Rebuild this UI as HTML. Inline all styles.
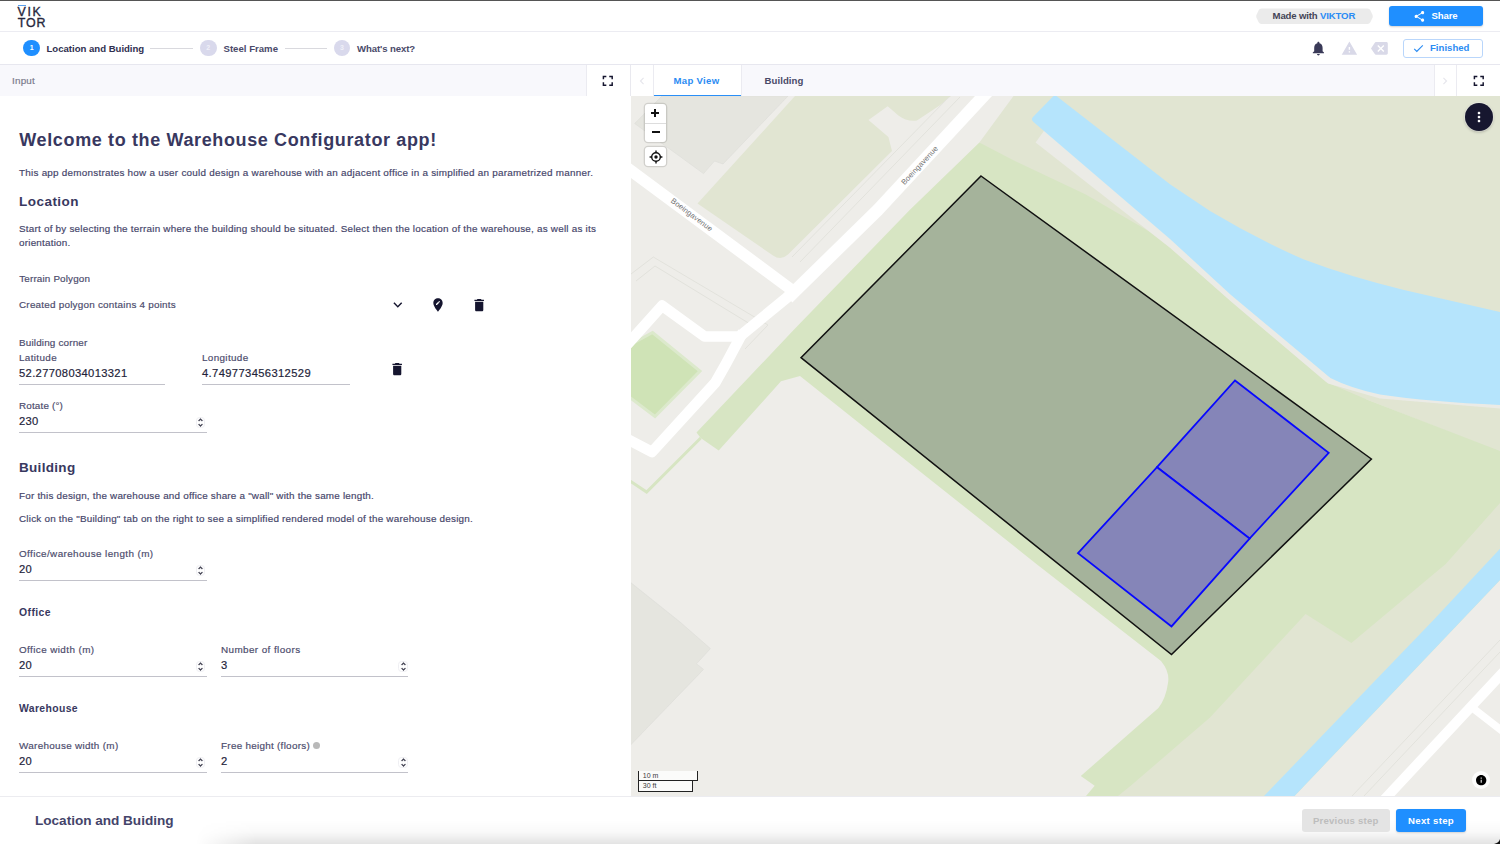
<!DOCTYPE html>
<html lang="en">
<head>
<meta charset="utf-8">
<title>Warehouse Configurator</title>
<style>
*{box-sizing:border-box;margin:0;padding:0}
html,body{width:1500px;height:844px;overflow:hidden;background:#fff}
body{font-family:"Liberation Sans",sans-serif;color:#3a3a5a;position:relative}
.abs{position:absolute}
.t{position:absolute;white-space:nowrap;line-height:1;-webkit-text-stroke:.18px currentColor}
.ic{position:absolute;display:block}
#topline{left:0;top:0;width:1500px;height:1px;background:#555}
#hdr{left:0;top:1px;width:1500px;height:31px;background:#fff;border-bottom:1px solid #ececf2}
#stepbar{left:0;top:32px;width:1500px;height:33px;background:#fff;border-bottom:1px solid #e7e7ef}
#tabbar{left:0;top:65px;width:1500px;height:31px;background:#f8f8fc}
.cell{position:absolute;top:65px;height:31px;background:#fff}
.vd{position:absolute;top:65px;height:31px;width:1px;background:#ebebf1}
.circ{position:absolute;width:16.6px;height:16.6px;border-radius:50%;background:#d9d9ec;color:#f0f0f8;font-size:7px;text-align:center;line-height:16.6px;font-weight:bold;top:39.9px}
.conn{position:absolute;height:1px;background:#d9d9de;top:47.6px}
#left{left:0;top:96px;width:630px;height:700px;background:#fff}
#map{left:630px;top:96px;width:870px;height:700px;overflow:hidden;background:#eeede9}
#foot{left:0;top:796px;width:1500px;height:48px;background:#fff;border-top:1px solid #ececf0}
.ul{position:absolute;height:1px;background:#c2c2ca}
.spin{position:absolute;width:9.2px;height:11.2px;border:1px solid #efeff3;border-radius:3.5px;background:#fff}
.mbox{position:absolute;background:#fff;border-radius:3px;box-shadow:0 0 0 1.3px rgba(0,0,0,.12)}
.btn{position:absolute;border-radius:3px}
.scale{position:absolute;left:7.8px;background:rgba(255,255,255,.75);border:1.6px solid #222;border-top:none;font-size:7px;color:#3a3a3a;padding-left:4px;line-height:9px;height:10.6px;white-space:nowrap}
</style>
</head>
<body>
<div class="abs" id="hdr"></div>
<div class="abs" id="topline"></div>
<div class="abs" id="stepbar"></div>
<div class="abs" id="tabbar"></div>
<div class="cell" style="left:586px;width:44px"></div>
<div class="cell" style="left:631px;width:22px"></div>
<div class="cell" style="left:653.5px;width:87.5px;border-bottom:1.700px solid #2a8ff7"></div>
<div class="cell" style="left:1434px;width:66px"></div>
<div class="vd" style="left:586px"></div>
<div class="vd" style="left:630px;background:#e9e9ef"></div>
<div class="vd" style="left:653px"></div>
<div class="vd" style="left:741px"></div>
<div class="vd" style="left:1434px"></div>
<div class="vd" style="left:1456px"></div>
<div class="abs" id="left"></div>
<div class="abs" id="map">
<svg id="mapsvg" width="870" height="700" viewBox="630 96 870 700" style="position:absolute;left:0;top:0">
<rect x="630" y="96" width="870" height="700" fill="#eeede9"/>
<!-- buildings -->
<polygon points="662,96 634.7,123.5 703.5,173.6 714.5,161 723,164 788,96" fill="#e5e5df" stroke="#dededa" stroke-width=".7"/>
<polygon points="630,582 680,622 710.4,648.6 696.5,663.8 703.5,669.4 630,745.6" fill="#e5e5df" stroke="#dededa" stroke-width=".7"/>
<!-- pale field top -->
<path d="M795,96 L697.500,203.500 L773,255.500 Q781,261 788,254.500 L892,151 L888.4,137 L868.5,119.9 L887.7,106.3 L898.4,115.6 Q907,122 916.9,120.6 L939.6,105.6 L951,96 Z" fill="#e1e5d2"/>
<!-- pale big top right -->
<polygon points="1013.5,96 1500,96 1500,452 1368,400 1300,380 1100,230 979.4,142.6" fill="#e1e5d2"/>
<!-- light green big -->
<path d="M979.4,142.6 L909.7,210 L793.6,330 L696.5,432.6 L700.7,438 L718.7,450.6 L781,381.3 L800,376 L920,471.4 L1036.4,564 L1161,661 Q1170,672 1168,683 Q1166,698 1158.4,708 L1080.8,776 L1094.7,785.8 L1086,796 L1500,796 L1500,451 L1368,400 L1326,382 L1231,301 L1170,247.7 L1150,232 L1085.8,194.6 L1010,158.6 Z" fill="#d7e5c3"/>
<!-- thin V outline -->
<polyline points="700.7,438 646.6,492 630,481" fill="none" stroke="#d7e5c3" stroke-width="3"/>
<!-- green square -->
<polygon points="652.500,332.500 700,371 655,416.500 628,396 628,346" fill="#cfe3b6" stroke="#dce9cc" stroke-width="3"/>
<!-- pale bottom right -->
<polygon points="1210,717.5 1305.6,614 1351.4,643 1445.7,564 1500,503 1500,560 1270,796 1118,796 1130.7,785.8" fill="#e1e5d2"/>
<!-- grey strip under water -->
<path d="M1046,128 L1035.6,142.4 L1170,247.7 L1231,301.500 L1328,383.500 L1380,398.500 L1500,408.500 L1500,404 L1380,393 L1231,290 L1100,172 Z" fill="#ebebe6"/>
<!-- water river -->
<path d="M1056.4,96 L1170,184.2 L1210,211 Q1255,238 1304,259.600 Q1350,277 1404,290 L1500,312 L1500,405 Q1430,402 1380,394.600 Q1350,388 1330.400,378 L1231,295 L1170,239 L1100,179 L1033.500,122 Q1030.500,119.500 1033,117 L1053.500,96 Z" fill="#b5e4fc"/>
<!-- land SE of canal -->
<polygon points="1500,580 1294.5,796 1500,796" fill="#eeede9"/>
<!-- canal -->
<polygon points="1500,548.7 1433.5,620 1264,796 1294.5,796 1500,580" fill="#b5e4fc"/>
<!-- faint lines -->
<g fill="none" stroke="#e2e2dc" stroke-width="1">
<polyline points="949,97 792,257"/>
<polyline points="960,97 800,262"/>
<polyline points="631,274 653.300,257 768,325 745,349"/>
<polyline points="636,281 655,266 755,327"/>
<polyline points="1500,640 1352,796"/>
<polyline points="1500,652 1364,796"/>
</g>
<!-- roads -->
<g fill="none" stroke="#fff" stroke-linejoin="round">
<polyline points="990,89 983.5,96 877.8,210 795,291 788,298" stroke-width="12.5"/>
<polyline points="795,291 741.4,335" stroke-width="10.8"/>
<polyline points="625,166.300 793.800,291.500" stroke-width="11.500"/>
<polyline points="741.400,336.500 704.600,336.500 662,305.700 625,347" stroke-width="10.700"/>
<polyline points="743,332 726,363.700 715.300,382.700 652,452 625,438" stroke-width="10.700"/>
<polyline points="1505,670.2 1383,801" stroke-width="10"/>
<polyline points="1472,707.5 1505,733" stroke-width="7.5"/>
</g>
<!-- labels -->
<g font-family="Liberation Sans, sans-serif" font-size="7.6" fill="#747474" text-anchor="middle" letter-spacing="0.12" stroke="#fff" stroke-width="1.2" paint-order="stroke" stroke-opacity=".7">
<text transform="translate(690.300,216.800) rotate(37)">Boeingavenue</text>
<text transform="translate(921.5,167) rotate(-47)">Boeingavenue</text>
</g>
<!-- terrain polygon -->
<polygon points="981,176 1371.4,459 1171.5,654.5 801,357.7" fill="#a5b39b" stroke="#111" stroke-width="1.5"/>
<polygon points="1235,380.5 1328.7,452.8 1249.6,538.5 1157,467.2" fill="#8585b8" stroke="#0808ff" stroke-width="1.8"/>
<polygon points="1157,467.2 1249.6,538.5 1171.5,626.4 1078,553.2" fill="#8585b8" stroke="#0808ff" stroke-width="1.8"/>
</svg>

<div class="mbox" style="left:15.4px;top:7.8px;width:20.2px;height:38.4px"><div style="position:absolute;left:0;top:19px;width:100%;height:1px;background:#ddd"></div></div>
<div class="mbox" style="left:15.4px;top:51px;width:20.2px;height:19.4px"></div>
<svg class="ic" style="left:20.3px;top:12.2px" width="10" height="10" viewBox="0 0 10 10"><path d="M5 1v8M1 5h8" stroke="#111" stroke-width="2" fill="none"/></svg>
<svg class="ic" style="left:20.5px;top:31.3px" width="10" height="10" viewBox="0 0 10 10"><path d="M1 5h8" stroke="#111" stroke-width="2" fill="none"/></svg>
<svg class="ic" style="left:17.5px;top:52.7px" width="16" height="16" viewBox="0 0 16 16"><circle cx="8" cy="8" r="4.300" fill="none" stroke="#111" stroke-width="1.400"/><circle cx="8" cy="8" r="1.700" fill="#111"/><path d="M8 1.600v2.400M8 12v2.400M1.600 8h2.400M12 8h2.400" stroke="#111" stroke-width="1.400"/></svg>
<div class="abs" style="left:835px;top:7px;width:28px;height:28px;border-radius:50%;background:#17172f;box-shadow:0 0 0 1px rgba(255,255,255,.35),0 1px 3px rgba(0,0,0,.3)"></div>
<svg class="ic" style="left:841px;top:13px" width="16" height="16" viewBox="0 0 24 24"><path fill="#fff" d="M12 8c1.1 0 2-.9 2-2s-.9-2-2-2-2 .9-2 2 .9 2 2 2zm0 2c-1.1 0-2 .9-2 2s.9 2 2 2 2-.9 2-2-.9-2-2-2zm0 6c-1.1 0-2 .9-2 2s.9 2 2 2 2-.9 2-2-.9-2-2-2z"/></svg>
<div class="abs" style="left:842px;top:675px;width:18px;height:18px;border-radius:50%;background:rgba(255,255,255,.85)"></div>
<svg class="ic" style="left:844.8px;top:677.8px" width="12.4" height="12.4" viewBox="0 0 24 24"><path fill="#000" d="M12 2C6.48 2 2 6.48 2 12s4.48 10 10 10 10-4.48 10-10S17.52 2 12 2zm1 15h-2v-6h2v6zm0-8h-2V7h2v2z"/></svg>
<div class="scale" style="top:674.5px;width:60.7px">10 m</div>
<div class="scale" style="top:685.1px;width:55.4px">30 ft</div>
</div>
<div class="abs" style="left:630px;top:96px;width:.7px;height:700px;background:#fff"></div>
<div class="abs" id="foot"></div>
<div class="abs" style="left:196px;top:820px;width:1304px;height:24px;background:linear-gradient(to bottom,rgba(0,0,0,0) 0%,rgba(0,0,0,.025) 50%,rgba(0,0,0,.11) 100%);-webkit-mask-image:linear-gradient(to right,transparent 0,#000 60px);mask-image:linear-gradient(to right,transparent 0,#000 60px)"></div>
<svg class="ic" style="left:1492px;top:836px" width="8" height="8" viewBox="0 0 8 8"><path d="M8 3 Q7 7 2 8 L8 8Z" fill="#111"/></svg>

<!-- logo -->
<div class="abs" style="left:18px;top:4.6px;width:7.5px;height:1.6px;background:#5aa0ee"></div>
<span class="t" style="left:17.6px;top:5.6px;font-size:12.4px;color:#26263c;letter-spacing:1.6px;-webkit-text-stroke:.35px #26263c">VIK</span>
<span class="t" style="left:17.8px;top:16.6px;font-size:12.4px;color:#26263c;letter-spacing:.9px;-webkit-text-stroke:.35px #26263c">TOR</span>

<!-- made with pill -->
<svg class="ic" style="left:1256px;top:7.6px" width="117" height="16.6" viewBox="0 0 117 16.6"><path d="M5.5 0.6 H111.500 Q113.500 0.6 114.500 2.6 L116.600 7 Q117 8.300 116.600 9.600 L114.500 14 Q113.500 16 111.500 16 H5.5 Q3.500 16 2.500 14 L0.400 9.600 Q0 8.300 0.400 7 L2.500 2.600 Q3.500 0.600 5.500 0.600Z" fill="#ebebeb"/></svg>
<!-- share button -->
<div class="btn" style="left:1388.8px;top:6px;width:94.4px;height:20.2px;background:#1f8fff;box-shadow:0 1px 2px rgba(0,0,0,.18)"></div>
<svg class="ic" style="left:1412.7px;top:9.5px" width="12.8" height="12.8" viewBox="0 0 24 24"><path fill="#fff" d="M18 16.08c-.76 0-1.44.3-1.96.77L8.91 12.7c.05-.23.09-.46.09-.7s-.04-.47-.09-.7l7.05-4.11c.54.5 1.25.81 2.04.81 1.66 0 3-1.34 3-3s-1.34-3-3-3-3 1.34-3 3c0 .24.04.47.09.7L8.04 9.81C7.5 9.31 6.79 9 6 9c-1.66 0-3 1.34-3 3s1.34 3 3 3c.79 0 1.500-.31 2.040-.81l7.120 4.160c-.05.21-.08.43-.08.65 0 1.610 1.310 2.920 2.920 2.920 1.610 0 2.920-1.310 2.920-2.920s-1.310-2.920-2.920-2.920z"/></svg>
<!-- finished button -->
<div class="btn" style="left:1403px;top:39.3px;width:79.8px;height:18.4px;background:#fff;border:1px solid #b9d6fb"></div>
<svg class="ic" style="left:1411.5px;top:41.9px" width="12.8" height="12.8" viewBox="0 0 24 24"><path fill="#2b8cf3" d="M9 16.17L4.83 12l-1.42 1.41L9 19 21 7l-1.41-1.41z"/></svg>
<!-- bell, warning, backspace -->
<svg class="ic" style="left:1310px;top:39.5px" width="16.8" height="16.8" viewBox="0 0 24 24"><path fill="#3a3a58" d="M12 22c1.1 0 2-.9 2-2h-4c0 1.1.89 2 2 2zm6-6v-5c0-3.07-1.64-5.64-4.5-6.32V4c0-.83-.67-1.500-1.500-1.500s-1.500.67-1.500 1.500v.68C7.630 5.360 6 7.920 6 11v5l-2 2v1h16v-1l-2-2z"/></svg>
<svg class="ic" style="left:1340.600px;top:39.6px" width="16.8" height="16.8" viewBox="0 0 24 24"><path fill="#d9d9e8" d="M1 21h22L12 2 1 21zm12-3h-2v-2h2v2zm0-4h-2v-4h2v4z"/></svg>
<svg class="ic" style="left:1371.300px;top:39.6px" width="16.8" height="16.8" viewBox="0 0 24 24"><path fill="#d9d9e8" d="M22 3H7c-.69 0-1.230.35-1.590.88L0 12l5.410 8.110c.36.53.9.89 1.590.89h15c1.100 0 2-.9 2-2V5c0-1.100-.9-2-2-2zm-3 12.590L17.590 17 14 13.410 10.410 17 9 15.590 12.590 12 9 8.410 10.410 7 14 10.590 17.590 7 19 8.410 15.410 12 19 15.590z"/></svg>

<!-- stepper -->
<div class="circ" style="left:23.4px;background:#1f8fff;color:#fff">1</div>
<div class="circ" style="left:200px">2</div>
<div class="circ" style="left:333.700px">3</div>
<div class="conn" style="left:150px;width:43px"></div>
<div class="conn" style="left:285px;width:42px"></div>

<!-- tab bar icons -->
<svg class="ic" style="left:599.3px;top:71.8px" width="17.6" height="17.6" viewBox="0 0 24 24"><path fill="#15152f" d="M7 14H5v5h5v-2H7v-3zm-2-4h2V7h3V5H5v5zm12 7h-3v2h5v-5h-2v3zM14 5v2h3v3h2V5h-5z"/></svg>
<svg class="ic" style="left:1470.200px;top:71.8px" width="17.6" height="17.6" viewBox="0 0 24 24"><path fill="#15152f" d="M7 14H5v5h5v-2H7v-3zm-2-4h2V7h3V5H5v5zm12 7h-3v2h5v-5h-2v3zM14 5v2h3v3h2V5h-5z"/></svg>
<svg class="ic" style="left:634.500px;top:73.6px" width="14" height="14" viewBox="0 0 24 24"><path fill="#e6e6ec" d="M15.410 7.410L14 6l-6 6 6 6 1.410-1.410L10.830 12z"/></svg>
<svg class="ic" style="left:1437.700px;top:73.6px" width="14" height="14" viewBox="0 0 24 24"><path fill="#e6e6ec" d="M10 6L8.590 7.410 13.170 12l-4.580 4.590L10 18l6-6z"/></svg>

<!-- form icons -->
<svg class="ic" style="left:388.60px;top:295.78px" width="17.6" height="17.6" viewBox="0 0 24 24"><path fill="#15152f" d="M16.590 8.590L12 13.170 7.410 8.590 6 10l6 6 6-6z"/></svg>
<svg class="ic" style="left:430.10px;top:296.60px" width="16" height="16" viewBox="0 0 24 24"><path fill="#15152f" d="M12 2C8.140 2 5 5.140 5 9c0 5.250 7 13 7 13s7-7.750 7-13c0-3.860-3.140-7-7-7zm-1.560 10H9v-1.440l3.350-3.340 1.430 1.430L10.440 12zm4.450-4.450l-.7.7-1.440-1.440.7-.7c.15-.15.39-.15.54 0l.9.9c.15.15.15.39 0 .54z"/></svg>
<svg class="ic" style="left:470.50px;top:296.70px" width="16.4" height="16.4" viewBox="0 0 24 24"><path fill="#15152f" d="M6 19c0 1.100.9 2 2 2h8c1.100 0 2-.9 2-2V7H6v12zM19 4h-3.500l-1-1h-5l-1 1H5v2h14V4z"/></svg>
<svg class="ic" style="left:389.10px;top:360.70px" width="16.4" height="16.4" viewBox="0 0 24 24"><path fill="#15152f" d="M6 19c0 1.100.9 2 2 2h8c1.100 0 2-.9 2-2V7H6v12zM19 4h-3.500l-1-1h-5l-1 1H5v2h14V4z"/></svg>

<!-- underlines -->
<div class="ul" style="left:19px;top:383.600px;width:146px"></div>
<div class="ul" style="left:202px;top:383.600px;width:147.500px"></div>
<div class="ul" style="left:19px;top:431.600px;width:187.500px"></div>
<div class="ul" style="left:19px;top:580px;width:187.500px"></div>
<div class="ul" style="left:19px;top:675.600px;width:187.500px"></div>
<div class="ul" style="left:221px;top:675.600px;width:187px"></div>
<div class="ul" style="left:19px;top:771.600px;width:187.500px"></div>
<div class="ul" style="left:221px;top:771.600px;width:187px"></div>
<!-- spinners -->
<div class="spin" style="left:196.1px;top:416.7px"></div><svg class="ic" style="left:195.2px;top:416.8px" width="11" height="11" viewBox="0 0 24 24"><path fill="#3c3c4c" stroke="#3c3c4c" stroke-width="1" d="M12 5.830L15.170 9l1.410-1.410L12 3 7.410 7.590 8.830 9 12 5.830zm0 12.340L8.830 15l-1.410 1.410L12 21l4.590-4.590L15.170 15 12 18.170z"/></svg>
<div class="spin" style="left:196.1px;top:565.1px"></div><svg class="ic" style="left:195.2px;top:565.2px" width="11" height="11" viewBox="0 0 24 24"><path fill="#3c3c4c" stroke="#3c3c4c" stroke-width="1" d="M12 5.830L15.170 9l1.410-1.410L12 3 7.410 7.590 8.830 9 12 5.830zm0 12.340L8.830 15l-1.410 1.410L12 21l4.590-4.590L15.170 15 12 18.170z"/></svg>
<div class="spin" style="left:196.1px;top:660.9px"></div><svg class="ic" style="left:195.2px;top:661.0px" width="11" height="11" viewBox="0 0 24 24"><path fill="#3c3c4c" stroke="#3c3c4c" stroke-width="1" d="M12 5.830L15.170 9l1.410-1.410L12 3 7.410 7.590 8.830 9 12 5.830zm0 12.340L8.830 15l-1.410 1.410L12 21l4.590-4.590L15.170 15 12 18.170z"/></svg>
<div class="spin" style="left:398.4px;top:660.9px"></div><svg class="ic" style="left:397.5px;top:661.0px" width="11" height="11" viewBox="0 0 24 24"><path fill="#3c3c4c" stroke="#3c3c4c" stroke-width="1" d="M12 5.830L15.170 9l1.410-1.410L12 3 7.410 7.590 8.830 9 12 5.830zm0 12.340L8.830 15l-1.410 1.410L12 21l4.590-4.590L15.170 15 12 18.170z"/></svg>
<div class="spin" style="left:196.1px;top:756.9px"></div><svg class="ic" style="left:195.2px;top:757.0px" width="11" height="11" viewBox="0 0 24 24"><path fill="#3c3c4c" stroke="#3c3c4c" stroke-width="1" d="M12 5.830L15.170 9l1.410-1.410L12 3 7.410 7.590 8.830 9 12 5.830zm0 12.340L8.830 15l-1.410 1.410L12 21l4.590-4.590L15.170 15 12 18.170z"/></svg>
<div class="spin" style="left:398.4px;top:756.9px"></div><svg class="ic" style="left:397.5px;top:757.0px" width="11" height="11" viewBox="0 0 24 24"><path fill="#3c3c4c" stroke="#3c3c4c" stroke-width="1" d="M12 5.830L15.170 9l1.410-1.410L12 3 7.410 7.590 8.830 9 12 5.830zm0 12.340L8.830 15l-1.410 1.410L12 21l4.590-4.590L15.170 15 12 18.170z"/></svg>

<!-- info dot -->
<div class="abs" style="left:313.100px;top:742.100px;width:7.400px;height:7.400px;border-radius:50%;background:#b9b9b9"></div>

<!-- footer buttons -->
<div class="btn" style="left:1302px;top:808.600px;width:87.800px;height:23.400px;background:#e4e4e4"></div>
<div class="btn" style="left:1396px;top:808.600px;width:69.800px;height:23.400px;background:#1f8fff;box-shadow:0 1px 2px rgba(0,0,0,.15)"></div>

<span class="t" id="t0" style="left:1272.6px;top:11.47px;font-size:9.6px;font-weight:bold;color:#444456;-webkit-text-stroke:0;letter-spacing:-0.158px;">Made with <span style="color:#2a8cf5">VIKTOR</span></span>
<span class="t" id="t1" style="left:1431.5px;top:10.57px;font-size:9.6px;font-weight:bold;color:#fff;-webkit-text-stroke:0;letter-spacing:-0.134px;">Share</span>
<span class="t" id="t2" style="left:1430.0px;top:43.37px;font-size:9.6px;font-weight:bold;color:#2b8cf3;-webkit-text-stroke:0;letter-spacing:0.006px;">Finished</span>
<span class="t" id="t3" style="left:46.5px;top:43.57px;font-size:9.6px;font-weight:bold;color:#2f2f50;-webkit-text-stroke:0;letter-spacing:-0.018px;">Location and Buiding</span>
<span class="t" id="t4" style="left:223.5px;top:43.57px;font-size:9.6px;font-weight:bold;color:#4a4a6a;-webkit-text-stroke:0;letter-spacing:0.009px;">Steel Frame</span>
<span class="t" id="t5" style="left:357.0px;top:43.57px;font-size:9.6px;font-weight:bold;color:#4a4a6a;-webkit-text-stroke:0;letter-spacing:-0.111px;">What's next?</span>
<span class="t" id="t6" style="left:12.0px;top:76.42px;font-size:9.9px;font-weight:normal;color:#7a7a8c;letter-spacing:0.206px;">Input</span>
<span class="t" id="t7" style="left:673.5px;top:75.67px;font-size:9.6px;font-weight:bold;color:#2b8cf3;-webkit-text-stroke:0;letter-spacing:0.307px;">Map View</span>
<span class="t" id="t8" style="left:764.5px;top:75.67px;font-size:9.6px;font-weight:bold;color:#4a4a68;-webkit-text-stroke:0;letter-spacing:0.078px;">Building</span>
<span class="t" id="t9" style="left:19.3px;top:130.76px;font-size:18px;font-weight:bold;color:#383860;-webkit-text-stroke:0;letter-spacing:0.630px;">Welcome to the Warehouse Configurator app!</span>
<span class="t" id="t10" style="left:19.0px;top:168.12px;font-size:9.9px;font-weight:normal;color:#45456a;letter-spacing:0.247px;">This app demonstrates how a user could design a warehouse with an adjacent office in a simplified an parametrized manner.</span>
<span class="t" id="t11" style="left:19.0px;top:195.27px;font-size:13.5px;font-weight:bold;color:#383860;-webkit-text-stroke:0;letter-spacing:0.469px;">Location</span>
<span class="t" id="t12" style="left:19.0px;top:224.02px;font-size:9.9px;font-weight:normal;color:#45456a;letter-spacing:0.225px;">Start of by selecting the terrain where the building should be situated. Select then the location of the warehouse, as well as its</span>
<span class="t" id="t13" style="left:19.0px;top:238.42px;font-size:9.9px;font-weight:normal;color:#45456a;letter-spacing:0.220px;">orientation.</span>
<span class="t" id="t14" style="left:19.2px;top:274.02px;font-size:9.9px;font-weight:normal;color:#4b4b6c;letter-spacing:0.158px;">Terrain Polygon</span>
<span class="t" id="t15" style="left:19.0px;top:300.02px;font-size:9.9px;font-weight:normal;color:#4b4b6c;letter-spacing:0.232px;">Created polygon contains 4 points</span>
<span class="t" id="t16" style="left:19.0px;top:338.02px;font-size:9.9px;font-weight:normal;color:#4b4b6c;letter-spacing:0.175px;">Building corner</span>
<span class="t" id="t17" style="left:19.0px;top:353.32px;font-size:9.9px;font-weight:normal;color:#4b4b6c;letter-spacing:0.355px;">Latitude</span>
<span class="t" id="t18" style="left:19.0px;top:367.82px;font-size:11.2px;font-weight:normal;color:#23233a;letter-spacing:0.343px;">52.27708034013321</span>
<span class="t" id="t19" style="left:202.0px;top:353.32px;font-size:9.9px;font-weight:normal;color:#4b4b6c;letter-spacing:0.345px;">Longitude</span>
<span class="t" id="t20" style="left:202.0px;top:367.82px;font-size:11.2px;font-weight:normal;color:#23233a;letter-spacing:0.372px;">4.749773456312529</span>
<span class="t" id="t21" style="left:19.0px;top:401.42px;font-size:9.9px;font-weight:normal;color:#4b4b6c;letter-spacing:0.163px;">Rotate (°)</span>
<span class="t" id="t22" style="left:19.0px;top:416.32px;font-size:11.2px;font-weight:normal;color:#23233a;letter-spacing:0.276px;">230</span>
<span class="t" id="t23" style="left:19.0px;top:460.87px;font-size:13.5px;font-weight:bold;color:#383860;-webkit-text-stroke:0;letter-spacing:0.312px;">Building</span>
<span class="t" id="t24" style="left:19.0px;top:491.02px;font-size:9.9px;font-weight:normal;color:#45456a;letter-spacing:0.206px;">For this design, the warehouse and office share a "wall" with the same length.</span>
<span class="t" id="t25" style="left:19.0px;top:513.82px;font-size:9.9px;font-weight:normal;color:#45456a;letter-spacing:0.221px;">Click on the "Building" tab on the right to see a simplified rendered model of the warehouse design.</span>
<span class="t" id="t26" style="left:19.0px;top:548.72px;font-size:9.9px;font-weight:normal;color:#4b4b6c;letter-spacing:0.394px;">Office/warehouse length (m)</span>
<span class="t" id="t27" style="left:19.0px;top:563.82px;font-size:11.2px;font-weight:normal;color:#23233a;letter-spacing:0.273px;">20</span>
<span class="t" id="t28" style="left:19.0px;top:608.20px;font-size:10.4px;font-weight:bold;color:#383860;-webkit-text-stroke:0;letter-spacing:0.424px;">Office</span>
<span class="t" id="t29" style="left:19.0px;top:644.92px;font-size:9.9px;font-weight:normal;color:#4b4b6c;letter-spacing:0.408px;">Office width (m)</span>
<span class="t" id="t30" style="left:19.0px;top:660.02px;font-size:11.2px;font-weight:normal;color:#23233a;letter-spacing:0.273px;">20</span>
<span class="t" id="t31" style="left:221.0px;top:644.92px;font-size:9.9px;font-weight:normal;color:#4b4b6c;letter-spacing:0.406px;">Number of floors</span>
<span class="t" id="t32" style="left:221.0px;top:660.02px;font-size:11.2px;font-weight:normal;color:#23233a;letter-spacing:0.000px;">3</span>
<span class="t" id="t33" style="left:19.0px;top:704.00px;font-size:10.4px;font-weight:bold;color:#383860;-webkit-text-stroke:0;letter-spacing:0.375px;">Warehouse</span>
<span class="t" id="t34" style="left:19.0px;top:740.52px;font-size:9.9px;font-weight:normal;color:#4b4b6c;letter-spacing:0.317px;">Warehouse width (m)</span>
<span class="t" id="t35" style="left:19.0px;top:756.02px;font-size:11.2px;font-weight:normal;color:#23233a;letter-spacing:0.273px;">20</span>
<span class="t" id="t36" style="left:221.0px;top:740.52px;font-size:9.9px;font-weight:normal;color:#4b4b6c;letter-spacing:0.279px;">Free height (floors)</span>
<span class="t" id="t37" style="left:221.0px;top:756.02px;font-size:11.2px;font-weight:normal;color:#23233a;letter-spacing:0.000px;">2</span>
<span class="t" id="t38" style="left:35.0px;top:813.79px;font-size:13.6px;font-weight:bold;color:#44446a;-webkit-text-stroke:0;letter-spacing:-0.023px;">Location and Buiding</span>
<span class="t" id="t39" style="left:1313.0px;top:816.07px;font-size:9.6px;font-weight:bold;color:#bdbdbd;-webkit-text-stroke:0;letter-spacing:0.198px;">Previous step</span>
<span class="t" id="t40" style="left:1408.0px;top:816.07px;font-size:9.6px;font-weight:bold;color:#fff;-webkit-text-stroke:0;letter-spacing:0.312px;">Next step</span>
</body>
</html>
